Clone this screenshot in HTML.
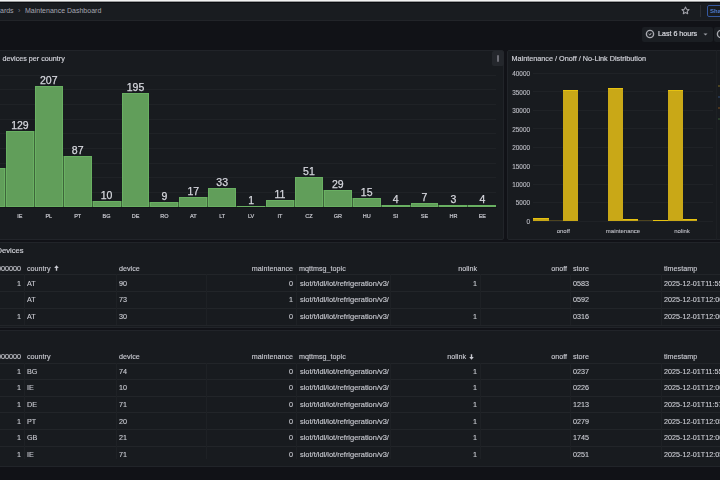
<!DOCTYPE html><html><head><meta charset="utf-8"><style>
*{box-sizing:border-box;margin:0;padding:0}
html,body{width:720px;height:480px;overflow:hidden;background:#111217;font-family:"Liberation Sans", sans-serif;color:#ccccdc}
.a{position:absolute;white-space:nowrap}
.panel{position:absolute;background:#181b1f;border:1px solid #212429;border-radius:2px}
.t{position:absolute;white-space:nowrap;line-height:1}
.td{font-size:7.2px;color:#cacbd2;-webkit-text-stroke:0.12px #cacbd2}
</style></head><body><div id="root" style="position:absolute;left:0;top:0;width:720px;height:480px;overflow:hidden;filter:blur(0.35px)">
<div class="a" style="left:0;top:-2px;width:720px;height:3px;background:#f2f3f3"></div>
<div class="a" style="left:0;top:1px;width:720px;height:1px;background:#9a9b9c"></div>
<div class="a" style="left:0;top:2px;width:720px;height:1px;background:#0a0c10"></div>
<div class="a" style="left:0;top:3px;width:720px;height:18px;background:#191c20;border-bottom:1px solid #222429"></div>
<div class="t" style="left:0px;top:7px;font-size:7px;color:#a6a7b0">ards</div>
<div class="t" style="left:18px;top:7px;font-size:7px;color:#7d7e86">›</div>
<div class="t" style="left:25px;top:7px;font-size:7px;color:#a6a7b0">Maintenance Dashboard</div>
<svg class="a" style="left:681px;top:6.3px" width="9" height="9" viewBox="0 0 24 24"><path d="M12 2.5l2.9 6.1 6.6.8-4.9 4.6 1.3 6.6L12 17.3l-5.9 3.3 1.3-6.6-4.9-4.6 6.6-.8z" fill="none" stroke="#a0a1a9" stroke-width="2.8" stroke-linejoin="round"/></svg>
<div class="a" style="left:700px;top:5px;width:1px;height:12px;background:#2c2e33"></div>
<div class="a" style="left:707px;top:5px;width:30px;height:12px;border:1px solid #34579f;border-radius:2px"></div>
<div class="t" style="left:710px;top:7.6px;font-size:6px;color:#4f7fd8;font-weight:bold">Share</div>
<div class="a" style="left:642px;top:27px;width:71px;height:15px;background:#1b1e23;border-radius:2px"></div>
<svg class="a" style="left:645.3px;top:29.2px" width="10" height="10" viewBox="0 0 10 10"><circle cx="5" cy="5" r="3.6" fill="none" stroke="#a9aab1" stroke-width="1.4"/><path d="M3.6 4.9L4.9 6.1L6.2 4.1" fill="none" stroke="#a9aab1" stroke-width="1"/></svg>
<div class="t" style="left:658px;top:31px;font-size:7.1px;color:#d8d9e0;-webkit-text-stroke:0.2px #d8d9e0">Last 6 hours</div>
<svg class="a" style="left:703px;top:33px" width="5" height="3" viewBox="0 0 5 3"><path d="M0.5 0.5L2.5 2.5L4.5 0.5z" fill="#9c9da5"/></svg>
<div class="a" style="left:714px;top:27px;width:20px;height:15px;background:#1b1e23;border-radius:2px"></div>
<svg class="a" style="left:716px;top:29.2px" width="10" height="10" viewBox="0 0 10 10"><circle cx="5" cy="5" r="3.6" fill="none" stroke="#a9aab1" stroke-width="1.4"/></svg>
<div class="panel" style="left:-10px;top:50px;width:514px;height:190px"></div>
<div class="t" style="left:2.5px;top:55px;font-size:7.2px;color:#d4d5dc;-webkit-text-stroke:0.15px #d4d5dc">devices per country</div>
<div class="a" style="left:492.3px;top:51px;width:11.5px;height:14.5px;background:#24272c;border-radius:2px"></div>
<div class="a" style="left:497.2px;top:55.3px;width:1.6px;height:6.6px;background:#6c6d75;border-radius:1px"></div>
<div class="a" style="left:0;top:206.40px;width:496px;height:1px;background:#1f2226"></div><div class="a" style="left:0;top:191.78px;width:496px;height:1px;background:#1f2226"></div><div class="a" style="left:0;top:177.15px;width:496px;height:1px;background:#1f2226"></div><div class="a" style="left:0;top:162.53px;width:496px;height:1px;background:#1f2226"></div><div class="a" style="left:0;top:147.90px;width:496px;height:1px;background:#1f2226"></div><div class="a" style="left:0;top:133.28px;width:496px;height:1px;background:#1f2226"></div><div class="a" style="left:0;top:118.65px;width:496px;height:1px;background:#1f2226"></div><div class="a" style="left:0;top:104.03px;width:496px;height:1px;background:#1f2226"></div><div class="a" style="left:0;top:89.40px;width:496px;height:1px;background:#1f2226"></div><div class="a" style="left:0;top:74.78px;width:496px;height:1px;background:#1f2226"></div>
<div class="a" style="left:-22.95px;top:167.71px;width:27.9px;height:39.20px;background:#619e5a;border:1px solid #69b062"></div><div class="a" style="left:5.95px;top:131.44px;width:27.9px;height:75.46px;background:#619e5a;border:1px solid #69b062"></div><div class="t" style="left:-0.10px;width:40px;text-align:center;top:120.44px;font-size:10.5px;color:#d6d7de;-webkit-text-stroke:0.25px #d6d7de">129</div><div class="t" style="left:-0.10px;width:40px;text-align:center;top:213.50px;font-size:5.5px;color:#c4c5cc;-webkit-text-stroke:0.2px #c4c5cc">IE</div><div class="a" style="left:34.85px;top:85.81px;width:27.9px;height:121.09px;background:#619e5a;border:1px solid #69b062"></div><div class="t" style="left:28.80px;width:40px;text-align:center;top:74.81px;font-size:10.5px;color:#d6d7de;-webkit-text-stroke:0.25px #d6d7de">207</div><div class="t" style="left:28.80px;width:40px;text-align:center;top:213.50px;font-size:5.5px;color:#c4c5cc;-webkit-text-stroke:0.2px #c4c5cc">PL</div><div class="a" style="left:63.75px;top:156.00px;width:27.9px;height:50.89px;background:#619e5a;border:1px solid #69b062"></div><div class="t" style="left:57.70px;width:40px;text-align:center;top:145.00px;font-size:10.5px;color:#d6d7de;-webkit-text-stroke:0.25px #d6d7de">87</div><div class="t" style="left:57.70px;width:40px;text-align:center;top:213.50px;font-size:5.5px;color:#c4c5cc;-webkit-text-stroke:0.2px #c4c5cc">PT</div><div class="a" style="left:92.65px;top:201.05px;width:27.9px;height:5.85px;background:#619e5a;border:1px solid #69b062"></div><div class="t" style="left:86.60px;width:40px;text-align:center;top:190.05px;font-size:10.5px;color:#d6d7de;-webkit-text-stroke:0.25px #d6d7de">10</div><div class="t" style="left:86.60px;width:40px;text-align:center;top:213.50px;font-size:5.5px;color:#c4c5cc;-webkit-text-stroke:0.2px #c4c5cc">BG</div><div class="a" style="left:121.55px;top:92.83px;width:27.9px;height:114.07px;background:#619e5a;border:1px solid #69b062"></div><div class="t" style="left:115.50px;width:40px;text-align:center;top:81.83px;font-size:10.5px;color:#d6d7de;-webkit-text-stroke:0.25px #d6d7de">195</div><div class="t" style="left:115.50px;width:40px;text-align:center;top:213.50px;font-size:5.5px;color:#c4c5cc;-webkit-text-stroke:0.2px #c4c5cc">DE</div><div class="a" style="left:150.45px;top:201.64px;width:27.9px;height:5.26px;background:#619e5a;border:1px solid #69b062"></div><div class="t" style="left:144.40px;width:40px;text-align:center;top:190.64px;font-size:10.5px;color:#d6d7de;-webkit-text-stroke:0.25px #d6d7de">9</div><div class="t" style="left:144.40px;width:40px;text-align:center;top:213.50px;font-size:5.5px;color:#c4c5cc;-webkit-text-stroke:0.2px #c4c5cc">RO</div><div class="a" style="left:179.35px;top:196.96px;width:27.9px;height:9.95px;background:#619e5a;border:1px solid #69b062"></div><div class="t" style="left:173.30px;width:40px;text-align:center;top:185.96px;font-size:10.5px;color:#d6d7de;-webkit-text-stroke:0.25px #d6d7de">17</div><div class="t" style="left:173.30px;width:40px;text-align:center;top:213.50px;font-size:5.5px;color:#c4c5cc;-webkit-text-stroke:0.2px #c4c5cc">AT</div><div class="a" style="left:208.25px;top:187.59px;width:27.9px;height:19.30px;background:#619e5a;border:1px solid #69b062"></div><div class="t" style="left:202.20px;width:40px;text-align:center;top:176.59px;font-size:10.5px;color:#d6d7de;-webkit-text-stroke:0.25px #d6d7de">33</div><div class="t" style="left:202.20px;width:40px;text-align:center;top:213.50px;font-size:5.5px;color:#c4c5cc;-webkit-text-stroke:0.2px #c4c5cc">LT</div><div class="a" style="left:237.15px;top:206.31px;width:27.9px;height:0.58px;background:#619e5a;border:1px solid #69b062"></div><div class="t" style="left:231.10px;width:40px;text-align:center;top:195.31px;font-size:10.5px;color:#d6d7de;-webkit-text-stroke:0.25px #d6d7de">1</div><div class="t" style="left:231.10px;width:40px;text-align:center;top:213.50px;font-size:5.5px;color:#c4c5cc;-webkit-text-stroke:0.2px #c4c5cc">LV</div><div class="a" style="left:266.05px;top:200.47px;width:27.9px;height:6.43px;background:#619e5a;border:1px solid #69b062"></div><div class="t" style="left:260.00px;width:40px;text-align:center;top:189.47px;font-size:10.5px;color:#d6d7de;-webkit-text-stroke:0.25px #d6d7de">11</div><div class="t" style="left:260.00px;width:40px;text-align:center;top:213.50px;font-size:5.5px;color:#c4c5cc;-webkit-text-stroke:0.2px #c4c5cc">IT</div><div class="a" style="left:294.95px;top:177.06px;width:27.9px;height:29.83px;background:#619e5a;border:1px solid #69b062"></div><div class="t" style="left:288.90px;width:40px;text-align:center;top:166.06px;font-size:10.5px;color:#d6d7de;-webkit-text-stroke:0.25px #d6d7de">51</div><div class="t" style="left:288.90px;width:40px;text-align:center;top:213.50px;font-size:5.5px;color:#c4c5cc;-webkit-text-stroke:0.2px #c4c5cc">CZ</div><div class="a" style="left:323.85px;top:189.94px;width:27.9px;height:16.96px;background:#619e5a;border:1px solid #69b062"></div><div class="t" style="left:317.80px;width:40px;text-align:center;top:178.94px;font-size:10.5px;color:#d6d7de;-webkit-text-stroke:0.25px #d6d7de">29</div><div class="t" style="left:317.80px;width:40px;text-align:center;top:213.50px;font-size:5.5px;color:#c4c5cc;-webkit-text-stroke:0.2px #c4c5cc">GR</div><div class="a" style="left:352.75px;top:198.12px;width:27.9px;height:8.77px;background:#619e5a;border:1px solid #69b062"></div><div class="t" style="left:346.70px;width:40px;text-align:center;top:187.12px;font-size:10.5px;color:#d6d7de;-webkit-text-stroke:0.25px #d6d7de">15</div><div class="t" style="left:346.70px;width:40px;text-align:center;top:213.50px;font-size:5.5px;color:#c4c5cc;-webkit-text-stroke:0.2px #c4c5cc">HU</div><div class="a" style="left:381.65px;top:204.56px;width:27.9px;height:2.34px;background:#619e5a;border:1px solid #69b062"></div><div class="t" style="left:375.60px;width:40px;text-align:center;top:193.56px;font-size:10.5px;color:#d6d7de;-webkit-text-stroke:0.25px #d6d7de">4</div><div class="t" style="left:375.60px;width:40px;text-align:center;top:213.50px;font-size:5.5px;color:#c4c5cc;-webkit-text-stroke:0.2px #c4c5cc">SI</div><div class="a" style="left:410.55px;top:202.81px;width:27.9px;height:4.09px;background:#619e5a;border:1px solid #69b062"></div><div class="t" style="left:404.50px;width:40px;text-align:center;top:191.81px;font-size:10.5px;color:#d6d7de;-webkit-text-stroke:0.25px #d6d7de">7</div><div class="t" style="left:404.50px;width:40px;text-align:center;top:213.50px;font-size:5.5px;color:#c4c5cc;-webkit-text-stroke:0.2px #c4c5cc">SE</div><div class="a" style="left:439.45px;top:205.15px;width:27.9px;height:1.75px;background:#619e5a;border:1px solid #69b062"></div><div class="t" style="left:433.40px;width:40px;text-align:center;top:194.15px;font-size:10.5px;color:#d6d7de;-webkit-text-stroke:0.25px #d6d7de">3</div><div class="t" style="left:433.40px;width:40px;text-align:center;top:213.50px;font-size:5.5px;color:#c4c5cc;-webkit-text-stroke:0.2px #c4c5cc">HR</div><div class="a" style="left:468.35px;top:204.56px;width:27.9px;height:2.34px;background:#619e5a;border:1px solid #69b062"></div><div class="t" style="left:462.30px;width:40px;text-align:center;top:193.56px;font-size:10.5px;color:#d6d7de;-webkit-text-stroke:0.25px #d6d7de">4</div><div class="t" style="left:462.30px;width:40px;text-align:center;top:213.50px;font-size:5.5px;color:#c4c5cc;-webkit-text-stroke:0.2px #c4c5cc">EE</div><div class="a" style="left:4.95px;top:167.71px;width:1px;height:39.20px;background:#3e653a"></div><div class="a" style="left:33.85px;top:131.44px;width:1px;height:75.46px;background:#3e653a"></div><div class="a" style="left:62.75px;top:156.00px;width:1px;height:50.89px;background:#3e653a"></div><div class="a" style="left:91.65px;top:201.05px;width:1px;height:5.85px;background:#3e653a"></div><div class="a" style="left:120.55px;top:201.05px;width:1px;height:5.85px;background:#3e653a"></div><div class="a" style="left:149.45px;top:201.64px;width:1px;height:5.26px;background:#3e653a"></div><div class="a" style="left:178.35px;top:201.64px;width:1px;height:5.26px;background:#3e653a"></div><div class="a" style="left:207.25px;top:196.96px;width:1px;height:9.95px;background:#3e653a"></div><div class="a" style="left:236.15px;top:206.31px;width:1px;height:0.58px;background:#3e653a"></div><div class="a" style="left:265.05px;top:206.31px;width:1px;height:0.58px;background:#3e653a"></div><div class="a" style="left:293.95px;top:200.47px;width:1px;height:6.43px;background:#3e653a"></div><div class="a" style="left:322.85px;top:189.94px;width:1px;height:16.96px;background:#3e653a"></div><div class="a" style="left:351.75px;top:198.12px;width:1px;height:8.77px;background:#3e653a"></div><div class="a" style="left:380.65px;top:204.56px;width:1px;height:2.34px;background:#3e653a"></div><div class="a" style="left:409.55px;top:204.56px;width:1px;height:2.34px;background:#3e653a"></div><div class="a" style="left:438.45px;top:205.15px;width:1px;height:1.75px;background:#3e653a"></div><div class="a" style="left:467.35px;top:205.15px;width:1px;height:1.75px;background:#3e653a"></div><div class="a" style="left:0;top:206.9px;width:497px;height:1.6px;background:#131418"></div>
<div class="panel" style="left:507px;top:50px;width:230px;height:190px"></div>
<div class="t" style="left:511.5px;top:55px;font-size:7.25px;color:#d4d5dc;-webkit-text-stroke:0.15px #d4d5dc">Maintenance / Onoff / No-Link Distribution</div>
<div class="a" style="left:533px;top:220.75px;width:180px;height:1px;background:#1f2226"></div><div class="t" style="left:500px;width:30px;text-align:right;top:218.95px;font-size:6.4px;color:#bdbec5;-webkit-text-stroke:0.12px #bdbec5">0</div><div class="a" style="left:533px;top:202.27px;width:180px;height:1px;background:#1f2226"></div><div class="t" style="left:500px;width:30px;text-align:right;top:200.47px;font-size:6.4px;color:#bdbec5;-webkit-text-stroke:0.12px #bdbec5">5000</div><div class="a" style="left:533px;top:183.79px;width:180px;height:1px;background:#1f2226"></div><div class="t" style="left:500px;width:30px;text-align:right;top:181.99px;font-size:6.4px;color:#bdbec5;-webkit-text-stroke:0.12px #bdbec5">10000</div><div class="a" style="left:533px;top:165.31px;width:180px;height:1px;background:#1f2226"></div><div class="t" style="left:500px;width:30px;text-align:right;top:163.51px;font-size:6.4px;color:#bdbec5;-webkit-text-stroke:0.12px #bdbec5">15000</div><div class="a" style="left:533px;top:146.82px;width:180px;height:1px;background:#1f2226"></div><div class="t" style="left:500px;width:30px;text-align:right;top:145.02px;font-size:6.4px;color:#bdbec5;-webkit-text-stroke:0.12px #bdbec5">20000</div><div class="a" style="left:533px;top:128.34px;width:180px;height:1px;background:#1f2226"></div><div class="t" style="left:500px;width:30px;text-align:right;top:126.54px;font-size:6.4px;color:#bdbec5;-webkit-text-stroke:0.12px #bdbec5">25000</div><div class="a" style="left:533px;top:109.86px;width:180px;height:1px;background:#1f2226"></div><div class="t" style="left:500px;width:30px;text-align:right;top:108.06px;font-size:6.4px;color:#bdbec5;-webkit-text-stroke:0.12px #bdbec5">30000</div><div class="a" style="left:533px;top:91.38px;width:180px;height:1px;background:#1f2226"></div><div class="t" style="left:500px;width:30px;text-align:right;top:89.58px;font-size:6.4px;color:#bdbec5;-webkit-text-stroke:0.12px #bdbec5">35000</div><div class="a" style="left:533px;top:72.90px;width:180px;height:1px;background:#1f2226"></div><div class="t" style="left:500px;width:30px;text-align:right;top:71.10px;font-size:6.4px;color:#bdbec5;-webkit-text-stroke:0.12px #bdbec5">40000</div>
<div class="a" style="left:533px;top:217.55px;width:15.50px;height:3.70px;background:#c9a817;border-top:1px solid #e6c210"></div><div class="a" style="left:548.5px;top:220.25px;width:14.80px;height:1px;background:#4d4420"></div><div class="a" style="left:563.3px;top:90.40px;width:15.20px;height:130.85px;background:#c9a817;border-top:1px solid #e6c210"></div><div class="a" style="left:607.5px;top:87.82px;width:15.50px;height:133.43px;background:#c9a817;border-top:1px solid #e6c210"></div><div class="a" style="left:623px;top:219.40px;width:14.50px;height:1.85px;background:#c9a817;border-top:1px solid #e6c210"></div><div class="a" style="left:637.5px;top:220.25px;width:15.00px;height:1px;background:#4d4420"></div><div class="a" style="left:652.5px;top:219.59px;width:15.00px;height:1.66px;background:#c9a817;border-top:1px solid #e6c210"></div><div class="a" style="left:667.5px;top:90.03px;width:15.00px;height:131.22px;background:#c9a817;border-top:1px solid #e6c210"></div><div class="a" style="left:682.5px;top:218.85px;width:14.70px;height:2.40px;background:#c9a817;border-top:1px solid #e6c210"></div>
<div class="a" style="left:716px;top:50px;width:1px;height:190px;background:#1d2024"></div>
<div class="a" style="left:717.5px;top:84.8px;width:2.5px;height:2.5px;border-radius:1px;background:#5e5220"></div>
<div class="a" style="left:717.5px;top:95.8px;width:2.5px;height:2.5px;border-radius:1px;background:#2a3f5e"></div>
<div class="a" style="left:717.5px;top:106.8px;width:2.5px;height:2.5px;border-radius:1px;background:#5e3f1e"></div>
<div class="a" style="left:717.5px;top:117.5px;width:2.5px;height:2.5px;border-radius:1px;background:#2f4a30"></div>
<div class="t" style="left:533.3px;width:60px;text-align:center;top:227.6px;font-size:6px;color:#bdbec5;-webkit-text-stroke:0.12px #bdbec5">onoff</div>
<div class="t" style="left:593px;width:60px;text-align:center;top:227.6px;font-size:6px;color:#bdbec5;-webkit-text-stroke:0.12px #bdbec5">maintenance</div>
<div class="t" style="left:652px;width:60px;text-align:center;top:227.6px;font-size:6px;color:#bdbec5;-webkit-text-stroke:0.12px #bdbec5">nolink</div>
<div class="panel" style="left:-10px;top:242px;width:740px;height:86px"></div>
<div class="t" style="left:-3.4px;top:247px;font-size:7.6px;color:#d4d5dc;-webkit-text-stroke:0.15px #d4d5dc">Devices</div>
<div class="t td" style="left:-70px;width:91px;text-align:right;top:264.90px">0000000</div>
<div class="t td" style="left:27px;top:264.90px">country<svg style="margin-left:3px;vertical-align:-0.5px" width="5" height="6" viewBox="0 0 5 6"><path d="M2.5 0.3L4.8 3H3.2V5.7H1.8V3H0.2z" fill="#c8c9d0"/></svg></div>
<div class="t td" style="left:119px;top:264.90px">device</div>
<div class="t td" style="left:206px;width:87px;text-align:right;top:264.90px">maintenance</div>
<div class="t td" style="left:299px;top:264.90px">mqttmsg_topic</div>
<div class="t td" style="left:390px;width:87px;text-align:right;top:264.90px">nolink</div>
<div class="t td" style="left:480px;width:87px;text-align:right;top:264.90px">onoff</div>
<div class="t td" style="left:573px;top:264.90px">store</div>
<div class="t td" style="left:664px;top:264.90px">timestamp</div>
<div class="a" style="left:0;top:274.20px;width:720px;height:1px;background:#222529"></div>
<div class="a" style="left:0;top:291.00px;width:720px;height:1px;background:#222529"></div>
<div class="a" style="left:0;top:307.80px;width:720px;height:1px;background:#222529"></div>
<div class="a" style="left:0;top:324.60px;width:720px;height:1px;background:#222529"></div>
<div class="a" style="left:24px;top:274.20px;width:1px;height:50.40px;background:#1e2125"></div>
<div class="a" style="left:116px;top:274.20px;width:1px;height:50.40px;background:#1e2125"></div>
<div class="a" style="left:206px;top:274.20px;width:1px;height:50.40px;background:#1e2125"></div>
<div class="a" style="left:296px;top:274.20px;width:1px;height:50.40px;background:#1e2125"></div>
<div class="a" style="left:390px;top:274.20px;width:1px;height:50.40px;background:#1e2125"></div>
<div class="a" style="left:480px;top:274.20px;width:1px;height:50.40px;background:#1e2125"></div>
<div class="a" style="left:570px;top:274.20px;width:1px;height:50.40px;background:#1e2125"></div>
<div class="a" style="left:661px;top:274.20px;width:1px;height:50.40px;background:#1e2125"></div>
<div class="t td" style="left:-70px;width:91px;text-align:right;top:279.50px">1</div>
<div class="t td" style="left:27px;top:279.50px">AT</div>
<div class="t td" style="left:119px;top:279.50px">90</div>
<div class="t td" style="left:206px;width:87px;text-align:right;top:279.50px">0</div>
<div class="t td" style="left:300px;top:279.50px;font-size:7.45px">siot/t/ldl/iot/refrigeration/v3/</div>
<div class="t td" style="left:390px;width:87px;text-align:right;top:279.50px">1</div>
<div class="t td" style="left:573px;top:279.50px">0583</div>
<div class="t td" style="left:664px;top:279.50px">2025-12-01T11:55:00</div>
<div class="t td" style="left:27px;top:296.30px">AT</div>
<div class="t td" style="left:119px;top:296.30px">73</div>
<div class="t td" style="left:206px;width:87px;text-align:right;top:296.30px">1</div>
<div class="t td" style="left:300px;top:296.30px;font-size:7.45px">siot/t/ldl/iot/refrigeration/v3/</div>
<div class="t td" style="left:573px;top:296.30px">0592</div>
<div class="t td" style="left:664px;top:296.30px">2025-12-01T12:00:00</div>
<div class="t td" style="left:-70px;width:91px;text-align:right;top:313.10px">1</div>
<div class="t td" style="left:27px;top:313.10px">AT</div>
<div class="t td" style="left:119px;top:313.10px">30</div>
<div class="t td" style="left:206px;width:87px;text-align:right;top:313.10px">0</div>
<div class="t td" style="left:300px;top:313.10px;font-size:7.45px">siot/t/ldl/iot/refrigeration/v3/</div>
<div class="t td" style="left:390px;width:87px;text-align:right;top:313.10px">1</div>
<div class="t td" style="left:573px;top:313.10px">0316</div>
<div class="t td" style="left:664px;top:313.10px">2025-12-01T12:00:00</div>
<div class="panel" style="left:-10px;top:330px;width:740px;height:137px"></div>
<div class="t td" style="left:-70px;width:91px;text-align:right;top:353.20px">0000000</div>
<div class="t td" style="left:27px;top:353.20px">country</div>
<div class="t td" style="left:119px;top:353.20px">device</div>
<div class="t td" style="left:206px;width:87px;text-align:right;top:353.20px">maintenance</div>
<div class="t td" style="left:299px;top:353.20px">mqttmsg_topic</div>
<div class="t td" style="left:390px;width:84px;text-align:right;top:353.20px">nolink<svg style="margin-left:3px;vertical-align:-0.5px" width="5" height="6" viewBox="0 0 5 6"><path d="M2.5 5.7L4.8 3H3.2V0.3H1.8V3H0.2z" fill="#c8c9d0"/></svg></div>
<div class="t td" style="left:480px;width:87px;text-align:right;top:353.20px">onoff</div>
<div class="t td" style="left:573px;top:353.20px">store</div>
<div class="t td" style="left:664px;top:353.20px">timestamp</div>
<div class="a" style="left:0;top:362.50px;width:720px;height:1px;background:#222529"></div>
<div class="a" style="left:0;top:379.10px;width:720px;height:1px;background:#222529"></div>
<div class="a" style="left:0;top:395.70px;width:720px;height:1px;background:#222529"></div>
<div class="a" style="left:0;top:412.30px;width:720px;height:1px;background:#222529"></div>
<div class="a" style="left:0;top:428.90px;width:720px;height:1px;background:#222529"></div>
<div class="a" style="left:0;top:445.50px;width:720px;height:1px;background:#222529"></div>
<div class="a" style="left:24px;top:362.50px;width:1px;height:96.60px;background:#1e2125"></div>
<div class="a" style="left:116px;top:362.50px;width:1px;height:96.60px;background:#1e2125"></div>
<div class="a" style="left:206px;top:362.50px;width:1px;height:96.60px;background:#1e2125"></div>
<div class="a" style="left:296px;top:362.50px;width:1px;height:96.60px;background:#1e2125"></div>
<div class="a" style="left:390px;top:362.50px;width:1px;height:96.60px;background:#1e2125"></div>
<div class="a" style="left:480px;top:362.50px;width:1px;height:96.60px;background:#1e2125"></div>
<div class="a" style="left:570px;top:362.50px;width:1px;height:96.60px;background:#1e2125"></div>
<div class="a" style="left:661px;top:362.50px;width:1px;height:96.60px;background:#1e2125"></div>
<div class="t td" style="left:-70px;width:91px;text-align:right;top:367.80px">1</div>
<div class="t td" style="left:27px;top:367.80px">BG</div>
<div class="t td" style="left:119px;top:367.80px">74</div>
<div class="t td" style="left:206px;width:87px;text-align:right;top:367.80px">0</div>
<div class="t td" style="left:300px;top:367.80px;font-size:7.45px">siot/t/ldl/iot/refrigeration/v3/</div>
<div class="t td" style="left:390px;width:87px;text-align:right;top:367.80px">1</div>
<div class="t td" style="left:573px;top:367.80px">0237</div>
<div class="t td" style="left:664px;top:367.80px">2025-12-01T11:55:00</div>
<div class="t td" style="left:-70px;width:91px;text-align:right;top:384.40px">1</div>
<div class="t td" style="left:27px;top:384.40px">IE</div>
<div class="t td" style="left:119px;top:384.40px">10</div>
<div class="t td" style="left:206px;width:87px;text-align:right;top:384.40px">0</div>
<div class="t td" style="left:300px;top:384.40px;font-size:7.45px">siot/t/ldl/iot/refrigeration/v3/</div>
<div class="t td" style="left:390px;width:87px;text-align:right;top:384.40px">1</div>
<div class="t td" style="left:573px;top:384.40px">0226</div>
<div class="t td" style="left:664px;top:384.40px">2025-12-01T12:00:00</div>
<div class="t td" style="left:-70px;width:91px;text-align:right;top:401.00px">1</div>
<div class="t td" style="left:27px;top:401.00px">DE</div>
<div class="t td" style="left:119px;top:401.00px">71</div>
<div class="t td" style="left:206px;width:87px;text-align:right;top:401.00px">0</div>
<div class="t td" style="left:300px;top:401.00px;font-size:7.45px">siot/t/ldl/iot/refrigeration/v3/</div>
<div class="t td" style="left:390px;width:87px;text-align:right;top:401.00px">1</div>
<div class="t td" style="left:573px;top:401.00px">1213</div>
<div class="t td" style="left:664px;top:401.00px">2025-12-01T11:57:00</div>
<div class="t td" style="left:-70px;width:91px;text-align:right;top:417.60px">1</div>
<div class="t td" style="left:27px;top:417.60px">PT</div>
<div class="t td" style="left:119px;top:417.60px">20</div>
<div class="t td" style="left:206px;width:87px;text-align:right;top:417.60px">0</div>
<div class="t td" style="left:300px;top:417.60px;font-size:7.45px">siot/t/ldl/iot/refrigeration/v3/</div>
<div class="t td" style="left:390px;width:87px;text-align:right;top:417.60px">1</div>
<div class="t td" style="left:573px;top:417.60px">0279</div>
<div class="t td" style="left:664px;top:417.60px">2025-12-01T12:05:00</div>
<div class="t td" style="left:-70px;width:91px;text-align:right;top:434.20px">1</div>
<div class="t td" style="left:27px;top:434.20px">GB</div>
<div class="t td" style="left:119px;top:434.20px">21</div>
<div class="t td" style="left:206px;width:87px;text-align:right;top:434.20px">0</div>
<div class="t td" style="left:300px;top:434.20px;font-size:7.45px">siot/t/ldl/iot/refrigeration/v3/</div>
<div class="t td" style="left:390px;width:87px;text-align:right;top:434.20px">1</div>
<div class="t td" style="left:573px;top:434.20px">1745</div>
<div class="t td" style="left:664px;top:434.20px">2025-12-01T12:00:00</div>
<div class="t td" style="left:-70px;width:91px;text-align:right;top:450.80px">1</div>
<div class="t td" style="left:27px;top:450.80px">IE</div>
<div class="t td" style="left:119px;top:450.80px">71</div>
<div class="t td" style="left:206px;width:87px;text-align:right;top:450.80px">0</div>
<div class="t td" style="left:300px;top:450.80px;font-size:7.45px">siot/t/ldl/iot/refrigeration/v3/</div>
<div class="t td" style="left:390px;width:87px;text-align:right;top:450.80px">1</div>
<div class="t td" style="left:573px;top:450.80px">0251</div>
<div class="t td" style="left:664px;top:450.80px">2025-12-01T12:05:00</div>
</div></body></html>
